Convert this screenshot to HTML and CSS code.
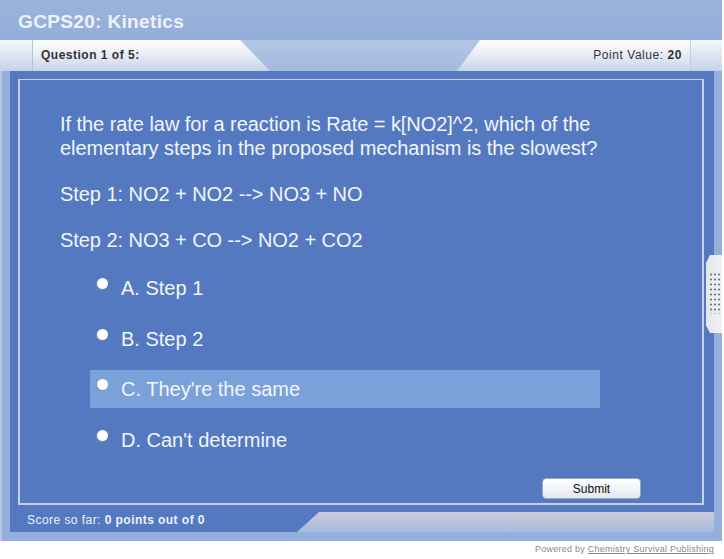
FILE: index.html
```html
<!DOCTYPE html>
<html>
<head>
<meta charset="utf-8">
<link rel="stylesheet" href="styles.css">
</head>
<body>
<div class="app">
  <div class="titlebar">GCPS20: Kinetics</div>
  <div class="tabbar">
    <div class="cap cap-left"></div>
    <div class="tab tab-left">Question 1 of 5:</div>
    <div class="tab-gap"></div>
    <div class="tab tab-right">Point Value: <b>20</b></div>
    <div class="cap cap-right"></div>
  </div>
  <div class="frame">
    <div class="body">
      <div class="inner">
        <p class="q">If the rate law for a reaction is Rate = k[NO2]^2, which of the elementary steps in the proposed mechanism is the slowest?</p>
        <p class="step step1">Step 1: NO2 + NO2 --&gt; NO3 + NO</p>
        <p class="step step2">Step 2: NO3 + CO --&gt; NO2 + CO2</p>
        <div class="options">
          <div class="opt"><span class="radio"></span><span class="label">A. Step 1</span></div>
          <div class="opt"><span class="radio"></span><span class="label">B. Step 2</span></div>
          <div class="opt hl"><span class="radio"></span><span class="label">C. They're the same</span></div>
          <div class="opt"><span class="radio"></span><span class="label">D. Can't determine</span></div>
        </div>
        <div class="actions"><button class="submit">Submit</button></div>
      </div>
      <div class="footer">
        <div class="score">Score so far: <b>0 points out of 0</b></div>
        <div class="band"></div>
      </div>
    </div>
  </div>
  <div class="grip"><div class="dots"></div></div>
</div>
<div class="powered">Powered by <u>Chemistry Survival Publishing</u></div>
</body>
</html>
```

FILE: styles.css
```css
html, body { margin: 0; padding: 0; background: #fff; }
body { font-family: "Liberation Sans", Arial, sans-serif; }

.app {
  position: relative;
  width: 722px;
  height: 541px;
  background: #94afdb;
  display: flex;
  flex-direction: column;
  box-shadow: inset 2px 0 0 #b6c8e6;
}

.titlebar {
  height: 40px;
  box-sizing: border-box;
  padding-left: 18px;
  padding-top: 10px;
  font-weight: bold;
  font-size: 19px;
  letter-spacing: 0.35px;
  color: #eef2fa;
  background: linear-gradient(#9ab3db, #93aed9);
  line-height: 24px;
}

.tabbar {
  height: 31px;
  display: flex;
  background: linear-gradient(#b3c6e4, #a3badd);
}
.cap {
  background: linear-gradient(#f6f8fb, #c6d2e6);
}
.cap-left { width: 32px; border-right: 1px solid #b9c4d6; }
.cap-right { width: 31px; border-left: 1px solid #c4cedd; }
.tab {
  background: linear-gradient(#fbfcfd 0%, #e9eef6 45%, #c8d4e7 100%);
  font-size: 12px;
  color: #333;
  line-height: 31px;
}
.tab-left {
  width: 237px;
  padding-left: 8px;
  box-sizing: border-box;
  font-weight: bold;
  letter-spacing: 0.5px;
  clip-path: polygon(0 0, 207px 0, 100% 100%, 0 100%);
}
.tab-gap { flex: 1; }
.tab-right {
  width: 233px;
  padding-right: 8px;
  box-sizing: border-box;
  text-align: right;
  letter-spacing: 0.55px;
  clip-path: polygon(23px 0, 100% 0, 100% 100%, 0 100%);
}

.frame {
  flex: 1;
  display: flex;
  padding: 0 8px 9px 10px;
}
.body {
  flex: 1;
  background: #5479c1;
  display: flex;
  flex-direction: column;
  padding: 8px 0 0 0;
}
.inner {
  margin: 0 10px 0 8px;
  height: 426px;
  box-sizing: border-box;
  border: 2px solid #c3d1ed;
  border-width: 1.5px 2px 2px 2px;
  display: flex;
  flex-direction: column;
  color: #f2f5fc;
  font-size: 20px;
  padding: 32px 0 0 40px;
}
.q, .step {
  margin: 0;
  line-height: 24px;
  width: 560px;
  letter-spacing: -0.05px;
}
.step1 { margin-top: 22px; }
.step2 { margin-top: 22px; }

.options {
  margin-top: 17px;
  margin-left: 30px;
  display: flex;
  flex-direction: column;
  gap: 12.5px;
}
.opt {
  width: 510px;
  height: 38px;
  display: flex;
  align-items: center;
  box-sizing: border-box;
  padding-left: 7px;
}
.opt.hl { background: #7aa1d9; }
.radio {
  width: 11px;
  height: 11px;
  border-radius: 50%;
  background: radial-gradient(circle at 55% 40%, #ffffff 55%, #e6eaf2 100%);
  box-shadow: -1px 1px 0 #7c8aa6;
  margin-top: -9px;
  margin-right: 13px;
}
.label { line-height: 24px; }

.actions {
  margin-top: auto;
  display: flex;
  justify-content: flex-end;
  padding: 0 61px 4px 0;
}
.submit {
  width: 99px;
  height: 21px;
  border: 1px solid #9aa8bf;
  border-radius: 4px;
  background: linear-gradient(#ffffff, #eef1f6 60%, #e2e7ef);
  font-family: "Liberation Sans", Arial, sans-serif;
  font-size: 12px;
  color: #111;
  padding: 0;
}

.footer {
  flex: 1;
  display: flex;
}
.score {
  width: 270px;
  padding-left: 17px;
  font-size: 12px;
  letter-spacing: 0.45px;
  color: #eef2fa;
  align-self: center;
  margin-top: 2px;
}
.band {
  flex: 1;
  align-self: flex-end;
  height: 20px;
  background: linear-gradient(#c9ccd8, #b9c3d9 50%, #a5badf);
  clip-path: polygon(22px 0, 100% 0, 100% 100%, 0 100%);
}

.grip {
  position: absolute;
  left: 706px;
  top: 255px;
  width: 16px;
  height: 78px;
  background: linear-gradient(90deg, #e4e6ea, #f0f1f3);
  clip-path: polygon(4px 0, 100% 0, 100% 100%, 4px 100%, 0 90%, 0 10%);
}
.dots {
  position: absolute;
  left: 3px;
  top: 17px;
  width: 12px;
  height: 42px;
  background-image: radial-gradient(circle, #6b6f78 0.7px, transparent 1.3px);
  background-size: 4px 5px;
}

.powered {
  width: 714px;
  text-align: right;
  font-size: 9px;
  color: #8a8a8a;
  margin-top: 3px;
  letter-spacing: 0.25px;
}
.powered u { color: #888; }
```
